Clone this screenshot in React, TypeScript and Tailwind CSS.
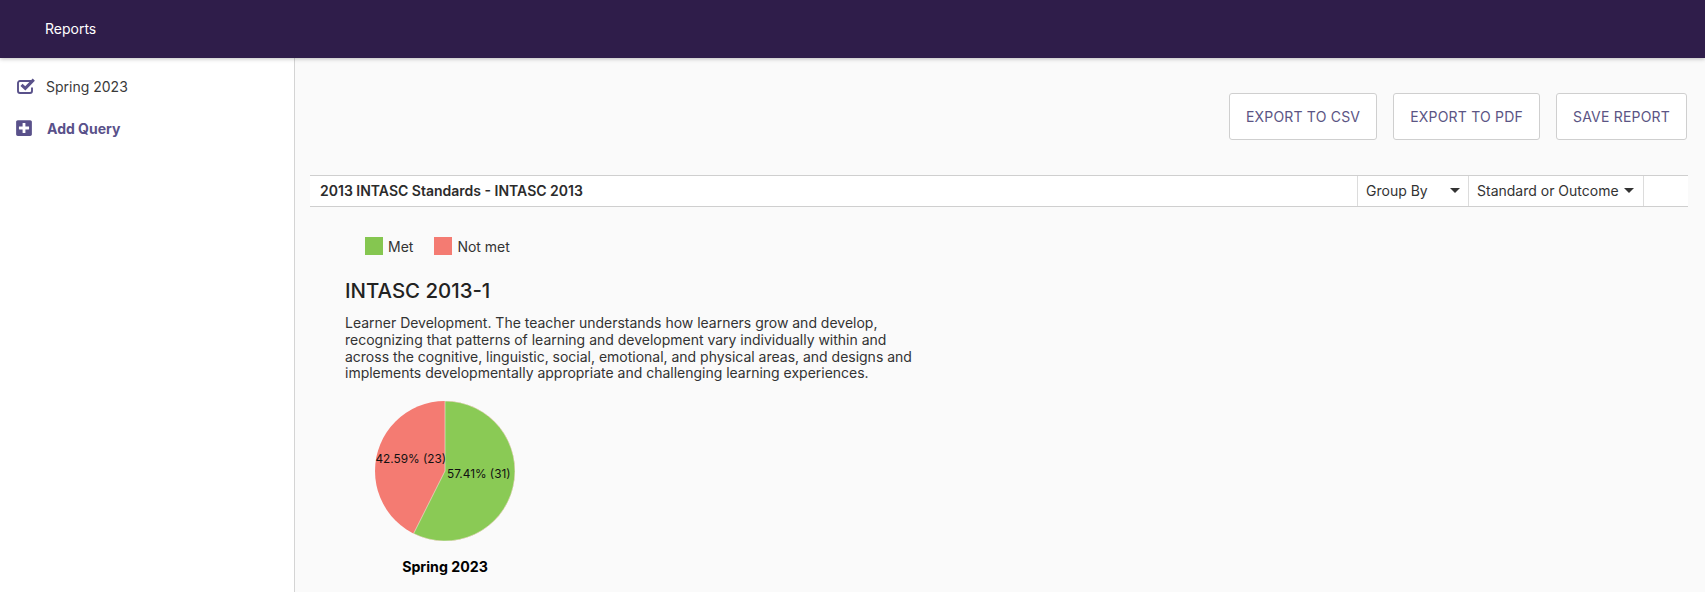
import { FaPlusSquare } from "react-icons/fa";

const actions = ["EXPORT TO CSV", "EXPORT TO PDF", "SAVE REPORT"];

const CheckedBox = () => (
  <svg width="19" height="16" viewBox="0 0 19 16" className="block shrink-0 text-[#59518a]">
    <path
      d="M14.5 3 H3 a2 2 0 0 0 -2 2 v8 a2 2 0 0 0 2 2 h10 a2 2 0 0 0 2 -2 v-3.5"
      fill="none"
      stroke="currentColor"
      strokeWidth="1.9"
    />
    <path d="M4.5 6.8 L8.3 10.4 L16.8 1.6" fill="none" stroke="currentColor" strokeWidth="3" />
  </svg>
);

const Caret = () => (
  <span className="h-0 w-0 border-x-[5px] border-t-[5px] border-x-transparent border-t-[#333]" />
);

const PieChart = () => (
  <svg width="140" height="140" viewBox="0 0 140 140" className="block">
    <circle cx="70" cy="70" r="70" fill="#f47b72" />
    <path d="M70 70 L70 0 A70 70 0 1 1 38.6 132.6 Z" fill="#8aca55" stroke="#fafafa" strokeWidth="0.5" />
    <text x="72" y="77" fontSize="11.8" fill="#111">57.41% (31)</text>
    <text x="0.5" y="62" fontSize="11.8" fill="#111">42.59% (23)</text>
  </svg>
);

export default function App() {
  return (
    <div className="flex h-screen flex-col overflow-hidden bg-[#fafafa] font-['Inter',sans-serif] text-[14px] text-[#333]">
      <header className="relative z-10 flex h-[58px] shrink-0 items-center bg-[#2f1d4a] pb-[1px] pl-[45px] text-white shadow-[0_1px_4px_rgba(0,0,0,0.25)]">
        Reports
      </header>
      <div className="flex min-h-0 flex-1">
        <aside className="w-[295px] shrink-0 border-r border-[#d4d4d4] bg-white pl-[17px] pt-[19px]">
          <div className="flex h-[18px] items-center">
            <CheckedBox />
            <span className="ml-[10px] text-[#3a3a3a]">Spring 2023</span>
          </div>
          <div className="mt-[24px] flex h-[18px] items-center">
            <FaPlusSquare className="-ml-[2px] h-[18px] w-[18px] text-[#59518a]" />
            <span className="ml-[14px] font-bold text-[#59518a]">Add Query</span>
          </div>
        </aside>
        <main className="min-w-0 flex-1 pl-[15px] pr-[17px]">
          <div className="mr-[1px] mt-[35px] flex justify-end gap-4">
            {actions.map((label) => (
              <button
                key={label}
                className="h-[47px] rounded-[3px] border border-[#cfcfcf] bg-white px-4 tracking-[0.2px] text-[#5b5584]"
              >
                {label}
              </button>
            ))}
          </div>
          <div className="mt-[35px] flex h-[32px] items-stretch border-y border-[#cfcfcf] bg-white">
            <div className="flex flex-1 items-center pb-[1px] pl-[10px] font-semibold text-[#2b2b2b]">
              2013 INTASC Standards - INTASC 2013
            </div>
            <div className="flex w-[111px] items-center justify-between border-l border-[#dcdcdc] pb-[1px] pl-2 pr-[8px]">
              Group By
              <Caret />
            </div>
            <div className="flex w-[175px] items-center justify-between border-l border-[#dcdcdc] pb-[1px] pl-2 pr-[9px]">
              Standard or Outcome
              <Caret />
            </div>
            <div className="w-[45px] border-l border-[#dcdcdc]" />
          </div>
          <div className="pl-[35px]">
            <div className="ml-[20px] mt-[30px] flex h-[18px] items-center">
              <span className="h-[18px] w-[18px] bg-[#85c650]" />
              <span className="ml-[5px]">Met</span>
              <span className="ml-[21px] h-[18px] w-[18px] bg-[#f47b72]" />
              <span className="ml-[5px]">Not met</span>
            </div>
            <h2 className="mt-[23px] text-[20.4px] font-medium leading-[26px] text-[#222]">INTASC 2013-1</h2>
            <p className="mt-[11px] w-[570px] tracking-[-0.01px] leading-[16.8px]">
              Learner Development. The teacher understands how learners grow and develop, recognizing that patterns of
              learning and development vary individually within and across the cognitive, linguistic, social, emotional,
              and physical areas, and designs and implements developmentally appropriate and challenging learning
              experiences.
            </p>
            <div className="mt-[19px] flex w-[200px] flex-col items-center">
              <PieChart />
              <div className="mt-[15px] text-[14.2px] font-bold text-black">Spring 2023</div>
            </div>
          </div>
        </main>
      </div>
    </div>
  );
}
